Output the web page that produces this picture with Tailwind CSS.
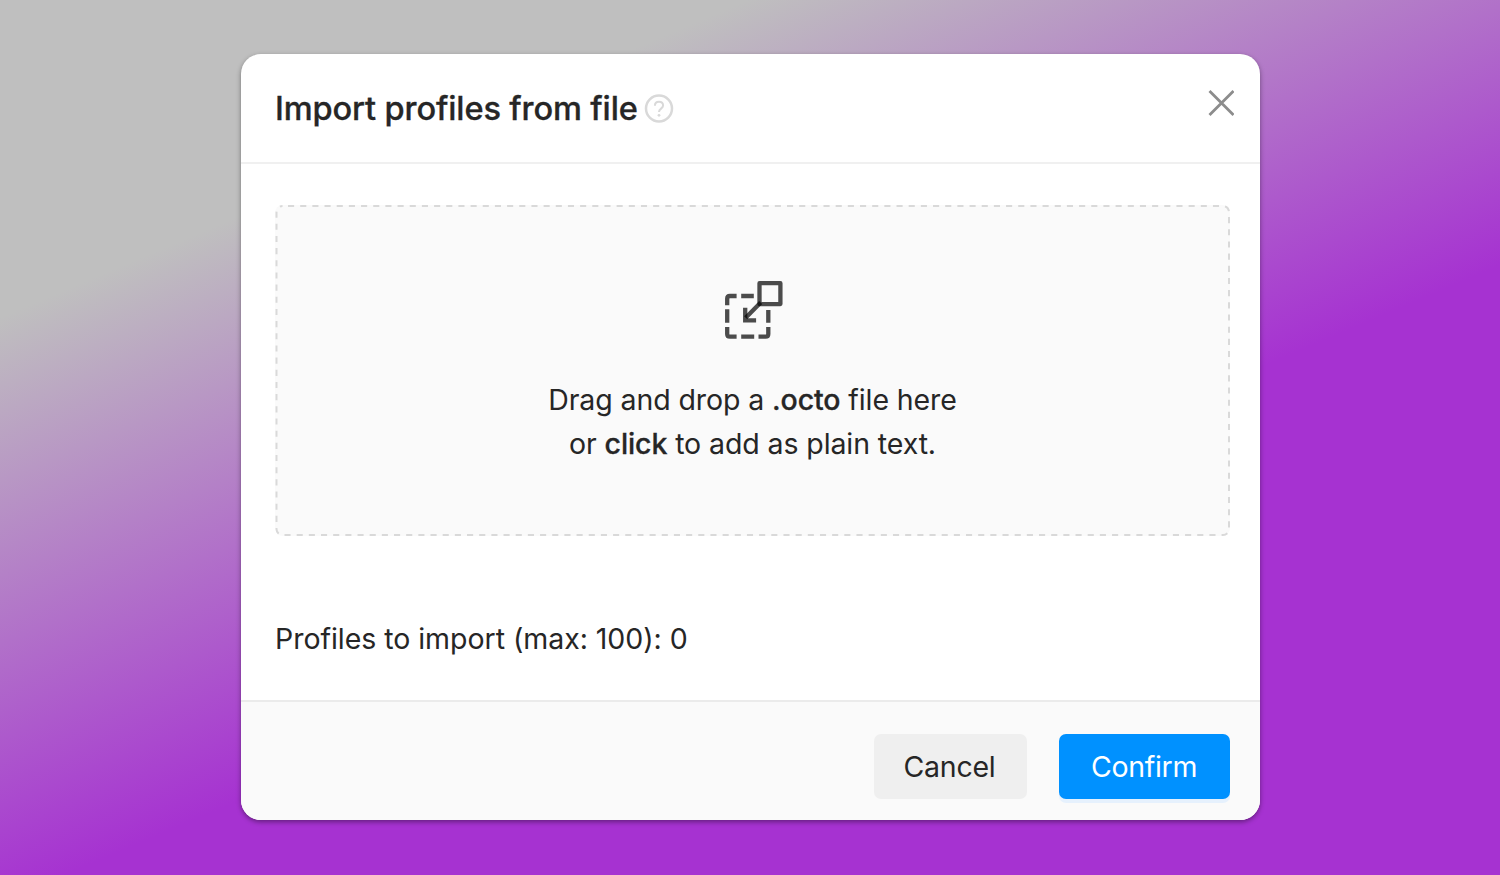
<!DOCTYPE html>
<html lang="en">
<head>
  <meta charset="UTF-8">
  <meta name="viewport" content="width=device-width, initial-scale=1.0">
  <title>Import profiles from file</title>
  <script src="https://cdn.jsdelivr.net/npm/@tailwindcss/browser@4"></script>
</head>
<body class="h-screen overflow-hidden bg-[linear-gradient(157deg,#bfbfbf_21%,#a632d1_59.7%)] font-['Inter',sans-serif] text-[#262626]">
  <div class="ml-[241px] mt-[54px] flex h-[766px] w-[1019px] flex-col overflow-hidden rounded-[20px] bg-white shadow-[0_2px_5px_rgba(0,0,0,0.4)]">
    <!-- Header -->
    <div class="flex h-[110px] shrink-0 items-center justify-between border-b-2 border-[#f0f0f0] pl-[34px] pr-[26px]">
      <div class="flex items-center gap-2">
        <h1 class="w-[361px] text-[32.6px] font-medium tracking-[-0.14px] whitespace-nowrap [-webkit-text-stroke:0.3px_#262626]">Import profiles from file</h1>
        <svg class="mt-px size-[30px]" viewBox="0 0 30 30" fill="none" stroke="#d9d9d9" stroke-width="2.5">
          <circle cx="15" cy="15.5" r="13" />
          <path d="M10.9 12.7c0-2.5 1.8-4 4.1-4s4.1 1.5 4.1 3.8c0 3.1-4.1 3.2-4.1 6.4" stroke-width="2" />
          <circle cx="15" cy="22.3" r="1.4" fill="#d9d9d9" stroke="none" />
        </svg>
      </div>
      <svg class="mb-[11px] size-[26px]" viewBox="0 0 26 26" fill="none" stroke="#8c8c8c" stroke-width="2.8">
        <path d="M1.5 1l24 24M25.5 1L1.5 25" />
      </svg>
    </div>

    <!-- Body -->
    <div class="flex-1 px-[34px] pt-[41px]">
      <div class="relative flex h-[331px] w-[955px] flex-col items-center rounded-lg bg-[#fafafa] pt-[75px]">
        <svg class="absolute inset-0 size-full" viewBox="0 0 955 331" fill="none" stroke="#d9d9d9" stroke-width="2">
          <rect x="1.5" y="1" width="952.5" height="329" rx="6" stroke-dasharray="6.1 6.07" stroke-dashoffset="6.65" />
        </svg>
        <svg class="size-[60px]" viewBox="0 0 60 60" fill="none" stroke="#000" stroke-opacity="0.7" stroke-width="4.3">
          <path d="M36.5 3.2h20.9v20.9H36.5z" stroke-linejoin="round" />
          <path d="M4.2 25.3v-6.6q0-2.7 2.7-2.7h6.7M18.2 16h12.6M4.2 29.3v13.4M4.2 47v6.9q0 2.7 2.7 2.7h6.7M18.2 56.6h13M35.5 56.6h7.1q2.7 0 2.7-2.7v-7M45.3 42.7V29.9" />
          <path d="M22.2 27.7v12.6h10.9M24.2 38.2h0" />
          <path d="M37.7 22.5L22.7 37.8" />
        </svg>
        <p class="mt-[38px] text-center text-[28.5px] leading-[44.4px] tracking-[-0.1px]">
          Drag and drop a <span class="font-medium [-webkit-text-stroke:0.3px_#262626]">.octo</span> file here<br>
          or <span class="font-medium [-webkit-text-stroke:0.3px_#262626]">click</span> to add as plain text.
        </p>
      </div>
      <p class="mt-[81px] text-[28.5px] leading-[44px] tracking-[-0.04px]">Profiles to import (max: 100): 0</p>
    </div>

    <!-- Footer -->
    <div class="flex h-[120px] shrink-0 items-start justify-end gap-8 border-t-2 border-[#ebebeb] bg-[#fafafa] pr-[30px] pt-8">
      <button class="h-[65px] w-[153px] rounded-[7px] bg-[#efefef] pt-[2px] pr-[2px] text-[28.5px] tracking-[-0.25px]">Cancel</button>
      <button class="h-[65px] w-[171px] rounded-[7px] bg-[#0091ff] pt-[2px] pr-[1px] text-[28.5px] tracking-[-0.3px] text-white shadow-[0_4px_0_#e6f1fd]">Confirm</button>
    </div>
  </div>
</body>
</html>
